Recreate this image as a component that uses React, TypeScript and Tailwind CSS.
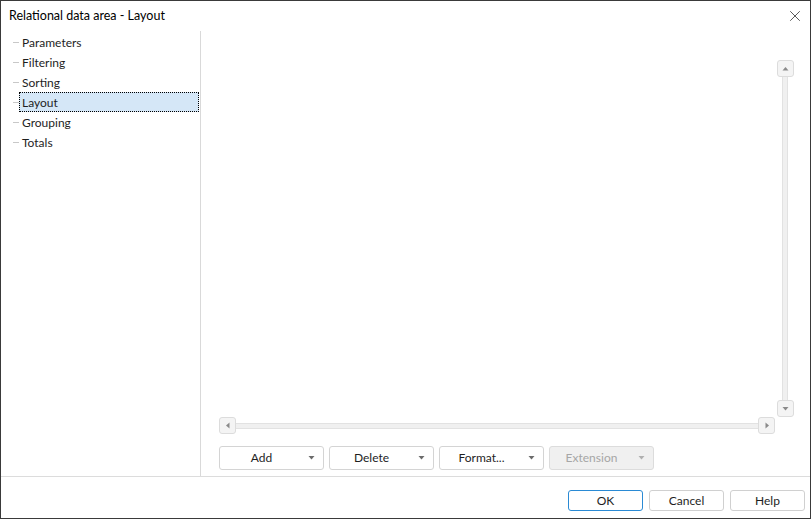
import { X } from 'lucide-react';

const items = ['Parameters', 'Filtering', 'Sorting', 'Layout', 'Grouping', 'Totals'];

function Caret({ color = '#6b6b6b' }: { color?: string }) {
  return (
    <svg width="7" height="4" viewBox="0 0 7 4">
      <path d="M0.5 0 L6.5 0 L3.5 3.5 Z" fill={color} />
    </svg>
  );
}

function DropButton({ label, disabled }: { label: string; disabled?: boolean }) {
  return (
    <div
      className={
        'relative flex h-[24px] w-[105px] items-center justify-center rounded-[3px] border ' +
        (disabled ? 'border-[#dcdcdc] bg-[#f0f0f0] text-[#a6a6a6]' : 'border-[#d4d4d4] bg-white text-[#1e1e1e]')
      }
    >
      <span className="pr-[20px]">{label}</span>
      <div className="absolute right-[8px] top-[9px]">
        <Caret color={disabled ? '#b0b0b0' : '#6b6b6b'} />
      </div>
    </div>
  );
}

function FooterButton({ label, primary }: { label: string; primary?: boolean }) {
  return (
    <div
      className={
        'flex h-[21px] w-[75px] items-center justify-center rounded-[3px] border bg-white ' +
        (primary ? 'border-[#2a8ad4]' : 'border-[#d0d0d0]')
      }
    >
      {label}
    </div>
  );
}

export default function App() {
  return (
    <div
      className="flex h-[519px] w-[811px] flex-col border border-[#3a3a3a] bg-white text-[12px] text-[#1e1e1e]"
      style={{ fontFamily: 'Lato, "Noto Sans", sans-serif' }}
    >
      {/* Title bar */}
      <div className="flex h-[30px] shrink-0 items-center justify-between pl-[8px] pr-[6px]">
        <span className="text-[12.5px] text-black">Relational data area - Layout</span>
        <X className="h-[18px] w-[18px] text-[#222]" strokeWidth={1} />
      </div>

      {/* Body */}
      <div className="flex min-h-0 flex-1">
        {/* Tree */}
        <div className="w-[200px] shrink-0 border-r border-[#d9d9d9] pt-[1px]">
          {items.map((it) => (
            <div key={it} className="flex h-[20px] items-center">
              <div className="ml-[12px] h-px w-[6px] bg-[#c8c8c8]" />
              {it === 'Layout' ? (
                <div className="mr-[1px] flex h-[20px] flex-1 items-center border border-dotted border-black bg-[#d5e7f7] pl-[2px] pt-[1px]">
                  {it}
                </div>
              ) : (
                <span className="pl-[3px] pt-[1px]">{it}</span>
              )}
            </div>
          ))}
        </div>

        {/* Right panel */}
        <div className="flex flex-1 flex-col pl-[18px] pr-[16px] pt-[29px]">
          <div className="flex h-[357px]">
            <div className="flex-1" />
            <div className="flex w-[18px] flex-col items-center">
              <div className="flex h-[17px] w-[17px] items-center justify-center rounded-[3px] border border-[#dcdcdc] bg-[#f4f4f4]">
                <svg width="7" height="4" viewBox="0 0 7 4">
                  <path d="M0.5 3.5 L6.5 3.5 L3.5 0 Z" fill="#8a8a8a" />
                </svg>
              </div>
              <div className="w-[6px] flex-1 border-x border-[#e2e2e2] bg-[#f0f0f0]" />
              <div className="flex h-[17px] w-[17px] items-center justify-center rounded-[3px] border border-[#dcdcdc] bg-[#f4f4f4]">
                <Caret color="#8a8a8a" />
              </div>
            </div>
          </div>
          <div className="flex h-[17px] w-[556px] items-center">
            <div className="flex h-[17px] w-[17px] items-center justify-center rounded-[3px] border border-[#dcdcdc] bg-[#f4f4f4]">
              <svg width="4" height="7" viewBox="0 0 4 7">
                <path d="M3.5 0.5 L3.5 6.5 L0 3.5 Z" fill="#8a8a8a" />
              </svg>
            </div>
            <div className="h-[6px] flex-1 border-y border-[#e2e2e2] bg-[#f0f0f0]" />
            <div className="flex h-[17px] w-[17px] items-center justify-center rounded-[3px] border border-[#dcdcdc] bg-[#f4f4f4]">
              <svg width="4" height="7" viewBox="0 0 4 7">
                <path d="M0.5 0.5 L0.5 6.5 L4 3.5 Z" fill="#8a8a8a" />
              </svg>
            </div>
          </div>
          <div className="mt-[12px] flex gap-[5px]">
            <DropButton label="Add" />
            <DropButton label="Delete" />
            <DropButton label="Format..." />
            <DropButton label="Extension" disabled />
          </div>
        </div>
      </div>

      {/* Footer */}
      <div className="flex h-[42px] shrink-0 items-start justify-end gap-[6px] border-t border-[#dcdcdc] pr-[5px] pt-[13px]">
        <FooterButton label="OK" primary />
        <FooterButton label="Cancel" />
        <FooterButton label="Help" />
      </div>
    </div>
  );
}
